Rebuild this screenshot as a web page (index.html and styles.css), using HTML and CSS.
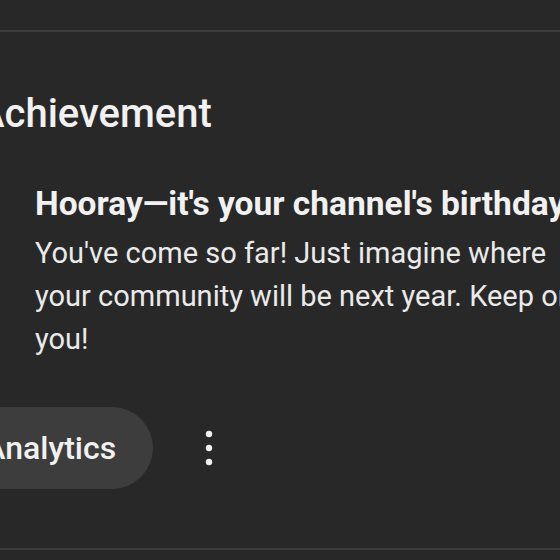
FILE: index.html
```html
<!DOCTYPE html>
<html lang="en">
<head>
  <meta charset="UTF-8">
  <title>Achievement</title>
  <link rel="stylesheet" href="styles.css">
</head>
<body>

<div class="card">
  <h2 class="card-title">Achievement</h2>

  <div class="message">
    <h3 class="message-title">Hooray—it's your channel's birthday!</h3>
    <p class="message-text">You've come so far! Just imagine where<br>your community will be next year. Keep on being<br>you!</p>
  </div>

  <div class="actions">
    <button class="pill-btn">Go to Analytics</button>
    <button class="menu-btn" aria-label="More">
      <svg width="8" height="36" viewBox="0 0 8 36">
        <circle cx="4" cy="4" r="3.2" fill="#f1f1f1"/>
        <circle cx="4" cy="18" r="3.2" fill="#f1f1f1"/>
        <circle cx="4" cy="32" r="3.2" fill="#f1f1f1"/>
      </svg>
    </button>
  </div>
</div>

</body>
</html>
```

FILE: styles.css
```css
body {
  margin: 0;
  background: #282828;
  color: #f1f1f1;
  font-family: Roboto, 'Noto Sans', sans-serif;
  overflow: hidden;
  height: 560px;
}
.card {
  margin-top: 30px;
  margin-left: -22px;
  border-top: 2px solid #3c3c3c;
  border-bottom: 2px solid #3c3c3c;
  padding-top: 58px;
  padding-bottom: 59px;
  width: 800px;
}
.card-title {
  margin: 0;
  font-size: 40px;
  line-height: 48px;
  font-weight: 500;
}
.message {
  margin-top: 46px;
  padding-left: 57px;
}
.message-title {
  margin: 0;
  font-size: 33.5px;
  line-height: 40px;
  font-weight: 700;
  white-space: nowrap;
}
.message-text {
  margin: 8px 0 0;
  font-size: 29px;
  line-height: 43px;
  color: #eaeaea;
  white-space: nowrap;
}
.actions {
  display: flex;
  align-items: center;
  gap: 32px;
  margin-top: 46px;
  margin-left: -116px;
}
.pill-btn {
  height: 82px;
  padding: 0 37px 0 38px;
  border: none;
  border-radius: 41px;
  background: #3d3d3d;
  color: #f1f1f1;
  font-family: inherit;
  font-size: 32px;
  font-weight: 500;
}
.menu-btn {
  width: 48px;
  height: 48px;
  border: none;
  background: none;
  padding: 0;
  display: flex;
  align-items: center;
  justify-content: center;
}
```
